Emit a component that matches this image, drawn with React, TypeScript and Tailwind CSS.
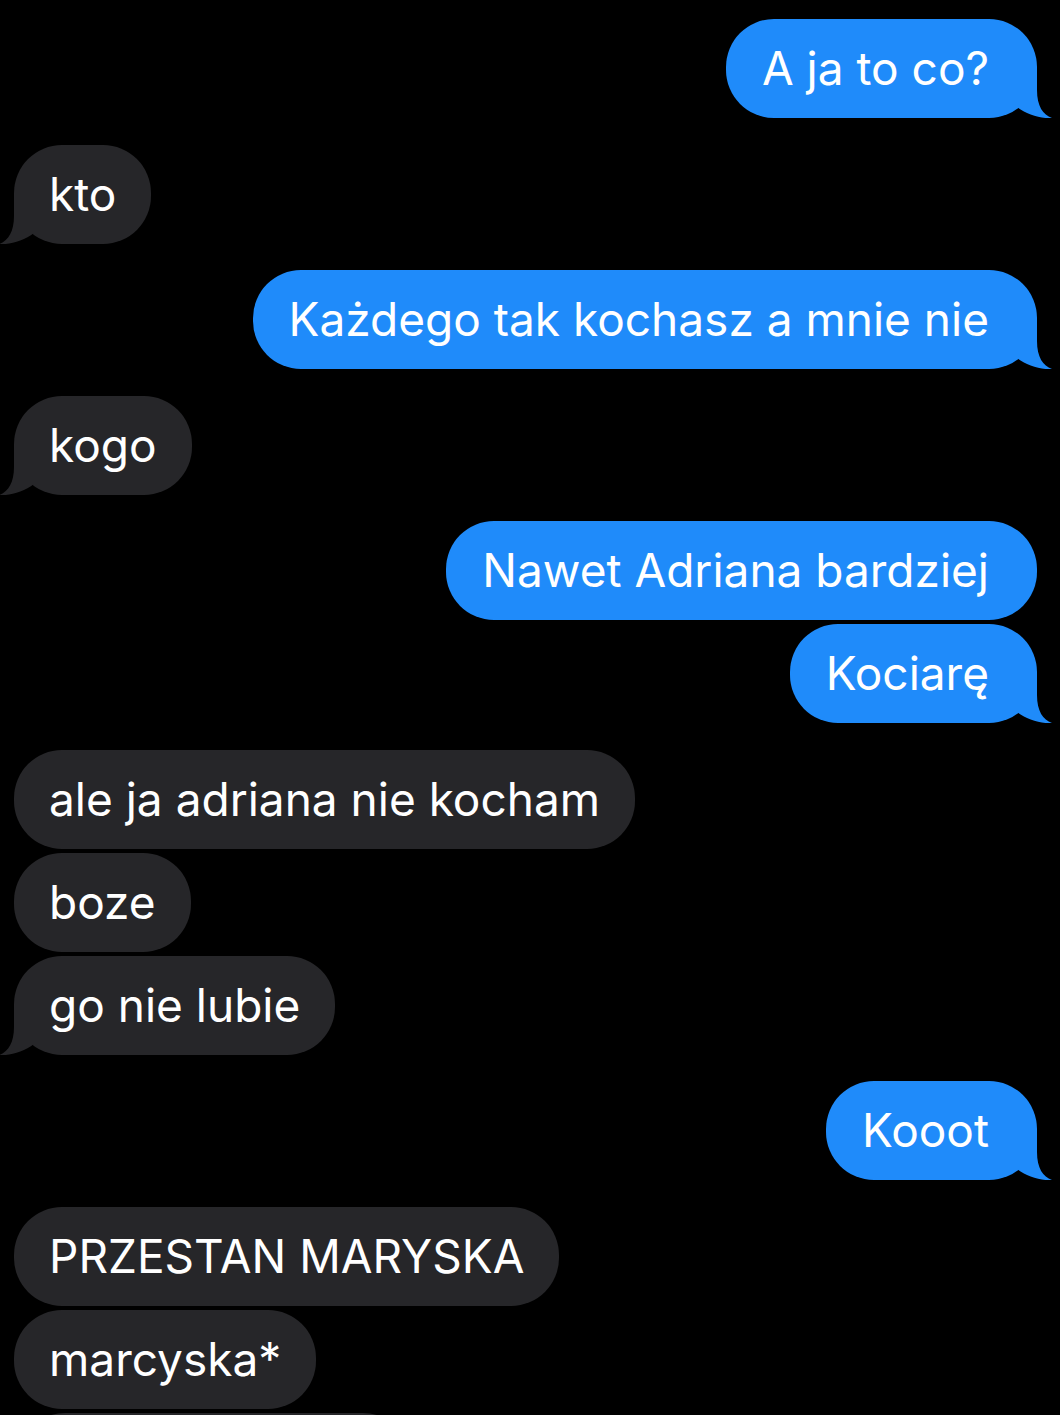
type Msg = { text: string; me: boolean; tail?: boolean; gap?: 'group' | 'tight' }

const messages: Msg[] = [
  { text: 'A ja to co?', me: true, tail: true },
  { text: 'kto', me: false, tail: true, gap: 'group' },
  { text: 'Każdego tak kochasz a mnie nie', me: true, tail: true, gap: 'group' },
  { text: 'kogo', me: false, tail: true, gap: 'group' },
  { text: 'Nawet Adriana bardziej', me: true, gap: 'group' },
  { text: 'Kociarę', me: true, tail: true, gap: 'tight' },
  { text: 'ale ja adriana nie kocham', me: false, gap: 'group' },
  { text: 'boze', me: false, gap: 'tight' },
  { text: 'go nie lubie', me: false, tail: true, gap: 'tight' },
  { text: 'Kooot', me: true, tail: true, gap: 'group' },
  { text: 'PRZESTAN MARYSKA', me: false, gap: 'group' },
  { text: 'marcyska*', me: false, gap: 'tight' },
]

// bubble tail, drawn for the right side; mirrored for incoming messages
function Tail({ color, left }: { color: string; left?: boolean }) {
  return (
    <svg
      width="50"
      height="50"
      viewBox="-35 -50 50 50"
      className={
        left
          ? 'absolute bottom-0 left-[-15px] -scale-x-100'
          : 'absolute bottom-0 right-[-15px]'
      }
    >
      <path
        d="M -35 -48 L 0 -48 L 0 -28 C 0 -12 6 -3 15 0 C 5 1 -10 -3 -20 -11 L -35 -11 Z"
        fill={color}
      />
    </svg>
  )
}

function Bubble({ msg }: { msg: Msg }) {
  const color = msg.me ? '#1f8bfa' : '#262629'
  const spacing = msg.gap === 'group' ? 'mt-[26.5px]' : msg.gap === 'tight' ? 'mt-[4px]' : ''
  return (
    <div className={`${spacing} flex ${msg.me ? 'justify-end pr-[23px]' : 'justify-start pl-[14px]'}`}>
      <div
        className={`relative flex h-[99px] items-center whitespace-nowrap rounded-[48px] text-[46px] text-white ${
          msg.me ? 'bg-[#1f8bfa] pl-[36px] pr-[48px]' : 'bg-[#262629] px-[35px]'
        }`}
      >
        {msg.tail && <Tail color={color} left={!msg.me} />}
        <span className="relative">{msg.text}</span>
      </div>
    </div>
  )
}

export default function App() {
  return (
    <div
      className="h-[1415px] w-[1060px] overflow-hidden bg-black pt-[19px]"
      style={{ fontFamily: 'Inter, "Noto Sans", sans-serif' }}
    >
      {messages.map((m, i) => (
        <Bubble key={i} msg={m} />
      ))}
      {/* next message, only its top edge is in view */}
      <div className="mt-[4px] pl-[17px]">
        <div className="h-[99px] w-[394px] rounded-[48px] bg-[#262629]" />
      </div>
    </div>
  )
}
